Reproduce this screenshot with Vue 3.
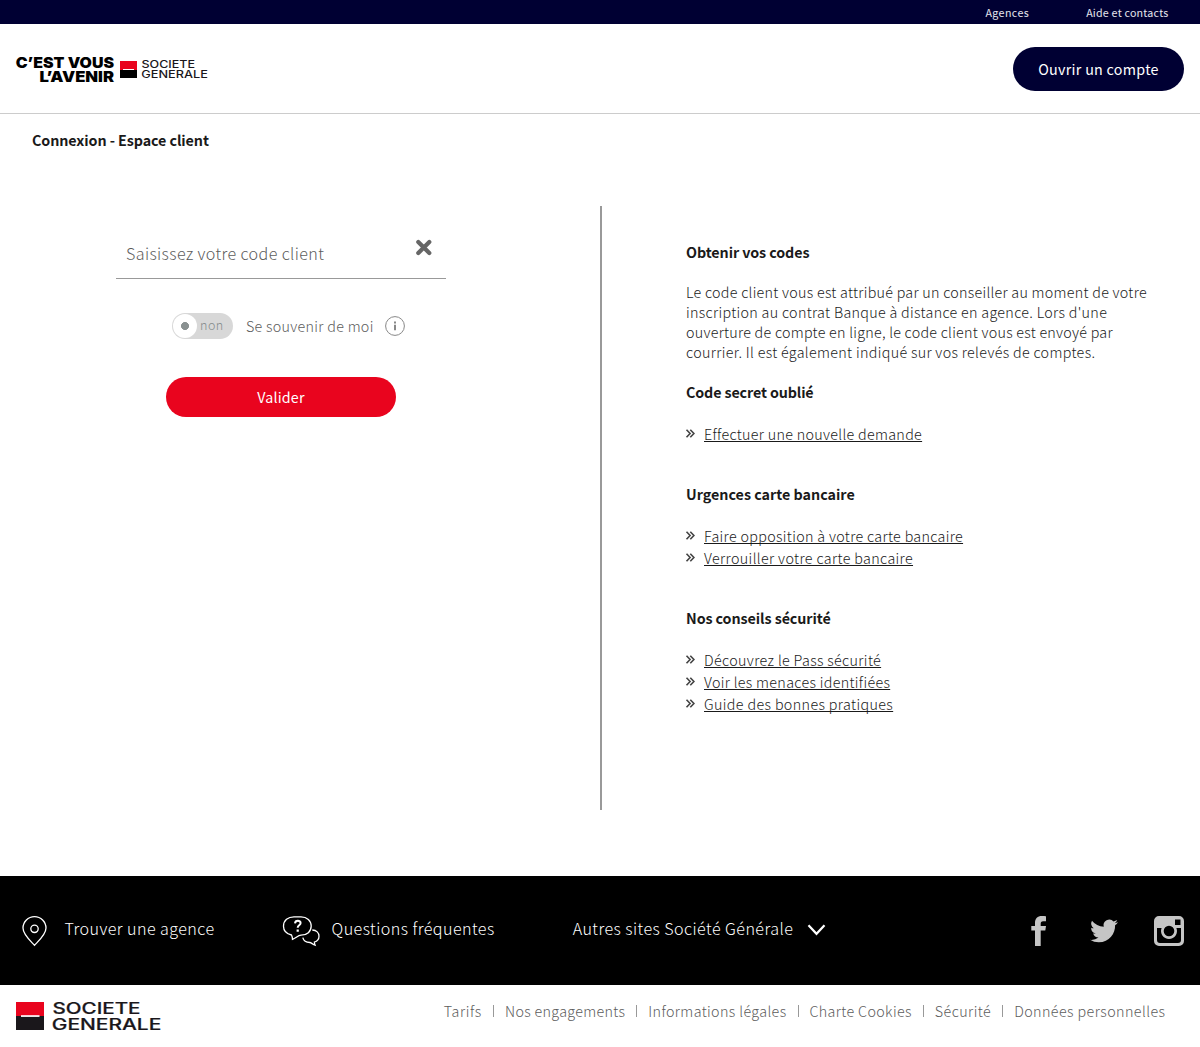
<script setup>
// Each entry carries its own tracking (px) next to the text.
const intro = [
  { text: 'Le code client vous est attribué par un conseiller au moment de votre', ls: 0.275 },
  { text: 'inscription au contrat Banque à distance en agence. Lors d\'une', ls: 0.315 },
  { text: 'ouverture de compte en ligne, le code client vous est envoyé par', ls: 0.26 },
  { text: 'courrier. Il est également indiqué sur vos relevés de comptes.', ls: 0.325 },
]
const groups = [
  { title: 'Code secret oublié', ls: -0.13, links: [{ text: 'Effectuer une nouvelle demande', ls: 0.31 }] },
  {
    title: 'Urgences carte bancaire',
    ls: 0,
    links: [
      { text: 'Faire opposition à votre carte bancaire', ls: 0.33 },
      { text: 'Verrouiller votre carte bancaire', ls: 0.37 },
    ],
  },
  {
    title: 'Nos conseils sécurité',
    ls: -0.08,
    links: [
      { text: 'Découvrez le Pass sécurité', ls: 0.35 },
      { text: 'Voir les menaces identifiées', ls: 0.32 },
      { text: 'Guide des bonnes pratiques', ls: 0.37 },
    ],
  },
]
const legal = [
  { text: 'Tarifs', ls: 0.6 },
  { text: 'Nos engagements', ls: 0.33 },
  { text: 'Informations légales', ls: 0.38 },
  { text: 'Charte Cookies', ls: 0.36 },
  { text: 'Sécurité', ls: 0.43 },
  { text: 'Données personnelles', ls: 0.42 },
]
const tracking = (item) => ({ letterSpacing: item.ls + 'px' })
</script>

<template>
  <div class="page">
    <div class="topbar"><a class="agencies">Agences</a><a class="contact">Aide et contacts</a></div>
    <header class="header">
      <svg class="brand" width="192" height="28" viewBox="0 0 192 28">
        <g class="slogan">
          <text x="-0.300" y="12.900" textLength="98.300" lengthAdjust="spacingAndGlyphs">C’EST VOUS</text>
          <text x="23.500" y="27" textLength="74.500" lengthAdjust="spacingAndGlyphs">L’AVENIR</text>
        </g>
        <path fill="#e9041e" d="M104 6h17v9h-17z" />
        <path fill="#000" d="M104 15h17v8h-17z" />
        <path fill="#fff" d="M107 14h11v1h-11z" />
        <g class="name small">
          <text x="125.500" y="13.300" textLength="53.500" lengthAdjust="spacingAndGlyphs">SOCIETE</text>
          <text x="125.300" y="23" textLength="66.500" lengthAdjust="spacingAndGlyphs">GENERALE</text>
        </g>
      </svg>
      <button class="open">Ouvrir un compte</button>
    </header>
    <h1 class="title">Connexion - Espace client</h1>
    <main class="main">
      <section class="login">
        <div class="field">
          <span>Saisissez votre code client</span>
          <svg width="16" height="16" viewBox="0 0 16 16"><path d="M2.300 2.100l11 11M13.300 2.100l-11 11" stroke="#666" stroke-width="4.200" stroke-linecap="round" /></svg>
        </div>
        <div class="remember">
          <span class="toggle"><i class="knob"></i><span class="state">non</span></span>
          <span class="remember-label">Se souvenir de moi</span>
          <svg width="20" height="20" viewBox="0 0 20 20"><circle cx="10" cy="10" r="9.400" fill="none" stroke="#888" /><path d="M9 5.500h2v2H9zM9 8.700h2v5.500H9z" fill="#888" /></svg>
        </div>
        <button class="submit">Valider</button>
      </section>
      <aside class="help">
        <h2 class="codes">Obtenir vos codes</h2>
        <p><span v-for="l in intro" :key="l.text" :style="tracking(l)">{{ l.text }}</span></p>
        <template v-for="g in groups" :key="g.title">
          <h2 :style="tracking(g)">{{ g.title }}</h2>
          <ul>
            <li v-for="l in g.links" :key="l.text">
              <svg width="9" height="9" viewBox="0 0 9 9"><path d="M.5.7l3.600 3.800L.5 8.300M4.300.7l3.600 3.800-3.600 3.800" fill="none" stroke="#444" stroke-width="1.600" /></svg>
              <a :style="tracking(l)">{{ l.text }}</a>
            </li>
          </ul>
        </template>
      </aside>
    </main>
    <footer>
      <div class="services">
        <svg class="pin" width="26" height="31" viewBox="0 0 26 31" fill="none" stroke="#fff" stroke-width="1.300"><path d="M12.500 29.300C9 25.500 1 18.800 1 12.100a11.500 11.500 0 0 1 23 0c0 6.700-8 13.400-11.500 17.200z" /><circle cx="12.500" cy="12.800" r="3.700" /></svg>
        <a class="find">Trouver une agence</a>
        <svg class="chat" width="38" height="31" viewBox="0 0 38 31" fill="none" stroke="#fff" stroke-width="1.300"><path d="M9.500 19C4.500 17.800 1.500 14.500 1.500 10.200 1.500 4.500 6 .8 12 .8h7c6 0 10.200 4 10.200 9.200 0 5.500-4.200 9.200-10.200 9.200-2.800 0-5 2.800-8.500 4.200 0-1.700-.4-3.200-1-4.400z" /><path d="M30.300 14c4.200.2 6.700 2.900 6.700 6.200 0 3-1.800 5-4.600 5.800.1 1.300.2 2 .7 3.200-2.200-.6-4-2.700-5.300-2.700-3.500 0-6.300-2-7-4.800" /><path d="M13 7.300c.3-3.300 5.600-3.200 5.600-.2 0 2.200-2.900 2.200-2.900 4.600" stroke-width="2" /><path d="M14.600 13.600h2.200v2.100h-2.200z" fill="#fff" stroke="none" /></svg>
        <a class="faq">Questions fréquentes</a>
        <a class="sites">Autres sites Société Générale</a>
        <svg class="chev" width="20" height="12" viewBox="0 0 20 12"><path d="M1.500 1.200l8 8.600 8-8.600" fill="none" stroke="#fff" stroke-width="2.200" /></svg>
        <div class="social">
          <svg width="16" height="30" viewBox="0 0 16 30"><path fill="#c5c5c5" d="M15 .3v5h-2.800c-2 0-2.500.9-2.500 2.400v2.300H15l-.7 4.600H9.700V30H4V14.600H.3V10H4V6.700C4 2.500 6.600 0 10.700 0c2 0 3.600.1 4.300.3z" /></svg>
          <svg class="twitter" width="28" height="25" viewBox="0 0 24 21"><path fill="#c5c5c5" d="M24 2.600a9.900 9.900 0 0 1-2.800.8A4.900 4.900 0 0 0 23.300.7a9.800 9.800 0 0 1-3.100 1.200 4.900 4.900 0 0 0-8.400 4.500A14 14 0 0 1 1.700 1.200 4.900 4.900 0 0 0 3.200 7.800a4.900 4.900 0 0 1-2.200-.6 4.900 4.900 0 0 0 3.900 4.900 4.900 4.900 0 0 1-2.200.1 4.900 4.900 0 0 0 4.600 3.400A9.900 9.900 0 0 1 0 17.600a13.900 13.900 0 0 0 7.500 2.200c9.100 0 14.300-7.700 14-14.600A10 10 0 0 0 24 2.600z" /></svg>
          <svg width="30" height="30" viewBox="0 0 30 30"><path fill="#c5c5c5" fill-rule="evenodd" d="M5 0h20a5 5 0 0 1 5 5v20a5 5 0 0 1-5 5H5a5 5 0 0 1-5-5V5a5 5 0 0 1 5-5zM21 3.500v5.500h5.500V3.500zM3 12v12a3 3 0 0 0 3 3h18a3 3 0 0 0 3-3V12h-4.600a8 8 0 1 1-14.800 0zM15 9.700a5.300 5.300 0 1 0 0 10.600 5.300 5.300 0 0 0 0-10.600z" /></svg>
        </div>
      </div>
      <div class="legal">
        <svg width="146" height="29" viewBox="0 0 146 29">
          <path fill="#e9041e" d="M0 0h28v14H0z" /><path fill="#1a171b" d="M0 14h28v14H0z" /><path fill="#fff" d="M5 13.200h18.500v1.700H5z" />
          <g class="name">
            <text x="36.500" y="11.800" textLength="88" lengthAdjust="spacingAndGlyphs">SOCIETE</text>
            <text x="35.800" y="27.800" textLength="109.500" lengthAdjust="spacingAndGlyphs">GENERALE</text>
          </g>
        </svg>
        <nav><a v-for="l in legal" :key="l.text" :style="tracking(l)">{{ l.text }}</a></nav>
      </div>
    </footer>
  </div>
</template>

<style>
body { margin: 0; background: #fff; }
</style>
<style scoped>
.page { width: 1200px; height: 1047px; display: flex; flex-direction: column; font-family: "Noto Sans CJK SC", "Noto Sans", sans-serif; font-weight: 300; font-size: 14.300px; color: #1a1a1a; }
h1, h2, p, ul { margin: 0; padding: 0; }
a, span { white-space: nowrap; }
svg { flex: none; overflow: visible; }
button { border: 0; padding: 0 0 2px; font: inherit; color: #fff; font-weight: 400; }
.topbar { height: 24px; background: #000033; color: #e6e6ee; display: flex; justify-content: flex-end; gap: 57px; padding-right: 31.500px; font-size: 10.700px; line-height: 25px; font-weight: 400; }
.agencies { letter-spacing: .4px; }
.contact { letter-spacing: .22px; }
.header { box-sizing: border-box; height: 90px; border-bottom: 1px solid #ccc; display: flex; justify-content: space-between; padding: 23px 16px 0; }
.brand { margin-top: 8px; }
.slogan { font: 900 15px Inter, sans-serif; }
.name { font: 500 15.800px Inter, sans-serif; fill: #1a171b; stroke: #1a171b; stroke-width: .2px; }
.name.small { font-size: 9.700px; stroke-width: 0; }
.open { width: 171px; height: 44px; border-radius: 22px; background: #000033; letter-spacing: .28px; }
.title { font-size: 14.300px; line-height: 20px; font-weight: 700; padding: 16px 32px 0; letter-spacing: -.08px; }
.main { display: flex; margin-top: 56px; height: 604px; }
.login { width: 600px; display: flex; flex-direction: column; }
.field { margin-left: 116px; width: 330px; height: 72px; border-bottom: 1px solid #999; display: flex; justify-content: space-between; color: #5c5c5c; font-size: 16.100px; line-height: 94px; letter-spacing: .38px; }
.field span { margin-left: 10px; }
.field svg { margin: 34px 14px 0 0; }
.remember { display: flex; margin: 34px 0 0 172px; height: 26px; line-height: 26px; color: #5c5c5c; align-items: center; }
.toggle { width: 61px; height: 26px; border-radius: 13px; background: #d8d8d8; display: flex; align-items: center; color: #858c8c; font-size: 12.500px; }
.state { padding-bottom: 2px; letter-spacing: .5px; }
.knob { width: 24px; height: 24px; margin: 0 3px 0 1px; border-radius: 50%; background: radial-gradient(circle, #8a9191 0 3.700px, #fff 4.300px); }
.remember-label { margin: 0 11.400px 0 13px; padding-bottom: 1px; letter-spacing: .3px; }
.submit { margin: 38px 0 0 166px; width: 230px; height: 40px; border-radius: 20px; background: #e9041e; letter-spacing: .15px; }
.help { box-sizing: border-box; flex: 1; border-left: 2px solid #999; padding: 36px 0 0 84px; line-height: 20px; }
h2 { font-size: 14.300px; font-weight: 700; line-height: 20px; }
.codes { letter-spacing: -.08px; }
p { margin: 20px 0; }
p span { display: block; }
ul { list-style: none; margin: 21px 0 39px; }
li { height: 22px; line-height: 22px; display: flex; align-items: center; }
li svg { margin-bottom: 1px; }
li a { margin-left: 9px; text-decoration: underline; text-underline-offset: 1px; text-decoration-thickness: 1px; text-decoration-skip-ink: none; }
footer { margin-top: 66px; }
.services { height: 109px; background: #000; color: #fff; display: flex; font-size: 16.100px; line-height: 104px; letter-spacing: .44px; }
.pin { margin: 40px 16.500px 0 22px; }
.chat { margin: 40px 12px 0 67px; }
.sites { margin-left: 78px; }
.chev { margin: 48px 0 0 14px; }
.social { margin: 40px 16px 0 auto; display: flex; }
.twitter { margin: 3px 36px 0 43px; }
.legal { display: flex; justify-content: space-between; padding: 17px 34.600px 0 16px; color: #5c5c5c; }
nav { display: flex; margin-top: -1px; line-height: 20px; }
nav a + a { margin-left: 11px; padding-left: 12px; background: linear-gradient(#999, #999) 0 4px / 1px 12px no-repeat; }
</style>
